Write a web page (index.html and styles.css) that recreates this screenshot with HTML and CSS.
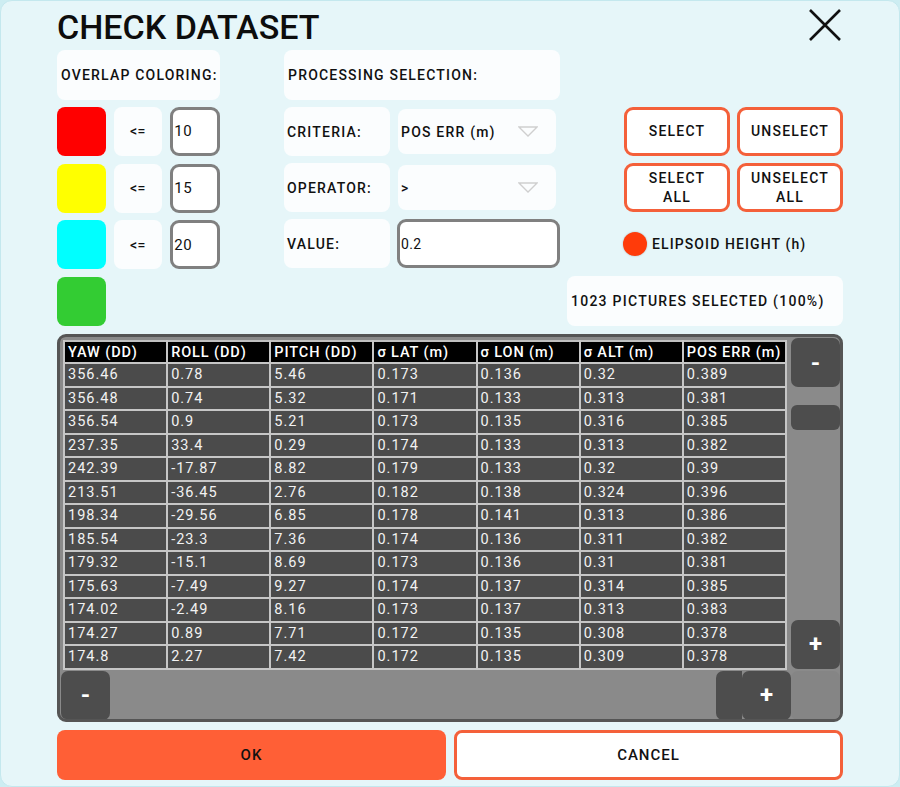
FILE: index.html
```html
<!DOCTYPE html>
<html>
<head>
<meta charset="utf-8">
<link rel="stylesheet" href="styles.css">
</head>
<body>
<div class="panel">
  <div class="titlebar">
    <h1 class="title">CHECK DATASET</h1>
    <svg class="close" width="34" height="34" viewBox="0 0 34 34"><path d="M2 2 L32 32 M32 2 L2 32" stroke="#111" stroke-width="2.6" fill="none"/></svg>
  </div>
  <div class="top">
    <div class="col-left">
      <div class="box head-box">OVERLAP COLORING:</div>
      <div class="crow"><div class="swatch red"></div><div class="box le">&lt;=</div><div class="inp small">10</div></div>
      <div class="crow"><div class="swatch yellow"></div><div class="box le">&lt;=</div><div class="inp small">15</div></div>
      <div class="crow"><div class="swatch cyan"></div><div class="box le">&lt;=</div><div class="inp small">20</div></div>
      <div class="crow"><div class="swatch green"></div></div>
    </div>
    <div class="col-mid">
      <div class="box head-box">PROCESSING SELECTION:</div>
      <div class="mrow"><div class="box lbl">CRITERIA:</div><div class="box dd">POS ERR (m)<svg class="tri" width="20" height="11" viewBox="0 0 20 11"><path d="M1 1 L19 1 L10 10 Z" fill="none" stroke="#cfcfcf" stroke-width="1.3"/></svg></div></div>
      <div class="mrow"><div class="box lbl">OPERATOR:</div><div class="box dd">&gt;<svg class="tri" width="20" height="11" viewBox="0 0 20 11"><path d="M1 1 L19 1 L10 10 Z" fill="none" stroke="#cfcfcf" stroke-width="1.3"/></svg></div></div>
      <div class="mrow"><div class="box lbl">VALUE:</div><div class="inp wide">0.2</div></div>
    </div>
    <div class="col-right">
      <div class="btns">
        <div class="obtn">SELECT</div><div class="obtn">UNSELECT</div>
        <div class="obtn two">SELECT<br>ALL</div><div class="obtn two">UNSELECT<br>ALL</div>
      </div>
      <div class="elip"><span class="dot"></span>ELIPSOID HEIGHT (h)</div>
      <div class="box pics">1023 PICTURES SELECTED (100%)</div>
    </div>
  </div>
  <div class="tframe">
    <div class="tarea">
      <table class="data">
        <thead><tr><th>YAW (DD)</th><th>ROLL (DD)</th><th>PITCH (DD)</th><th>σ LAT (m)</th><th>σ LON (m)</th><th>σ ALT (m)</th><th>POS ERR (m)</th></tr></thead>
        <tbody>
          <tr><td>356.46</td><td>0.78</td><td>5.46</td><td>0.173</td><td>0.136</td><td>0.32</td><td>0.389</td></tr>
          <tr><td>356.48</td><td>0.74</td><td>5.32</td><td>0.171</td><td>0.133</td><td>0.313</td><td>0.381</td></tr>
          <tr><td>356.54</td><td>0.9</td><td>5.21</td><td>0.173</td><td>0.135</td><td>0.316</td><td>0.385</td></tr>
          <tr><td>237.35</td><td>33.4</td><td>0.29</td><td>0.174</td><td>0.133</td><td>0.313</td><td>0.382</td></tr>
          <tr><td>242.39</td><td>-17.87</td><td>8.82</td><td>0.179</td><td>0.133</td><td>0.32</td><td>0.39</td></tr>
          <tr><td>213.51</td><td>-36.45</td><td>2.76</td><td>0.182</td><td>0.138</td><td>0.324</td><td>0.396</td></tr>
          <tr><td>198.34</td><td>-29.56</td><td>6.85</td><td>0.178</td><td>0.141</td><td>0.313</td><td>0.386</td></tr>
          <tr><td>185.54</td><td>-23.3</td><td>7.36</td><td>0.174</td><td>0.136</td><td>0.311</td><td>0.382</td></tr>
          <tr><td>179.32</td><td>-15.1</td><td>8.69</td><td>0.173</td><td>0.136</td><td>0.31</td><td>0.381</td></tr>
          <tr><td>175.63</td><td>-7.49</td><td>9.27</td><td>0.174</td><td>0.137</td><td>0.314</td><td>0.385</td></tr>
          <tr><td>174.02</td><td>-2.49</td><td>8.16</td><td>0.173</td><td>0.137</td><td>0.313</td><td>0.383</td></tr>
          <tr><td>174.27</td><td>0.89</td><td>7.71</td><td>0.172</td><td>0.135</td><td>0.308</td><td>0.378</td></tr>
          <tr><td>174.8</td><td>2.27</td><td>7.42</td><td>0.172</td><td>0.135</td><td>0.309</td><td>0.378</td></tr>
        </tbody>
      </table>
    </div>
    <div class="vscroll">
      <div class="sbtn">-</div>
      <div class="vthumb"></div>
      <div class="vspace"></div>
      <div class="sbtn">+</div>
    </div>
    <div class="hscroll">
      <div class="sbtn">-</div>
      <div class="hspace"></div>
      <div class="hthumb"></div>
      <div class="sbtn">+</div>
    </div>
    <div class="corner"></div>
  </div>
  <div class="actions">
    <div class="ok">OK</div>
    <div class="cancel">CANCEL</div>
  </div>
</div>
</body>
</html>
```

FILE: styles.css
```css
* { box-sizing: border-box; }
html, body { margin: 0; padding: 0; }
body {
  background: #cdedf2;
  font-family: Roboto, "Liberation Sans", sans-serif;
  color: #111;
}
.panel {
  width: 900px;
  height: 787px;
  background: #e6f6f9;
  border-radius: 12px;
  border: 1px solid #c4e8ee;
  padding: 0 56px;
  display: flex;
  flex-direction: column;
}
.titlebar {
  height: 49px;
  display: flex;
  align-items: center;
  justify-content: space-between;
}
.title {
  margin: 0;
  font-size: 34px;
  font-weight: 500;
  letter-spacing: 0;
  line-height: 1;
  padding-top: 2px;
  color: #0d0d0d;
}
.close { margin-right: 1px; margin-top: -2px; }
.top {
  display: flex;
  gap: 0;
  height: 277px;
}
.box {
  background: #fbfdfe;
  border-radius: 8px;
  display: flex;
  align-items: center;
  font-size: 14px;
  font-weight: 500;
  letter-spacing: 1.2px;
}
.head-box { height: 50px; padding-left: 4px; }
.col-left {
  width: 163px;
  display: flex;
  flex-direction: column;
  gap: 7px;
}
.crow { display: flex; gap: 8px; height: 50px; }
.swatch { width: 49px; height: 49px; border-radius: 8px; }
.red { background: #ff0000; }
.yellow { background: #ffff00; }
.cyan { background: #00ffff; }
.green { background: #33cc33; }
.le { width: 49px; height: 49px; justify-content: center; letter-spacing: 0.5px; }
.inp {
  background: #fff;
  border: 3px solid #808080;
  border-radius: 9px;
  display: flex;
  align-items: center;
  font-size: 15px;
  letter-spacing: 0.4px;
  padding-left: 1px;
}
.small { width: 50px; height: 49px; }
.col-mid {
  margin-left: 64px;
  width: 276px;
  display: flex;
  flex-direction: column;
  gap: 7px;
}
.col-mid .head-box { padding-left: 4px; }
.mrow { display: flex; gap: 8px; height: 49px; }
.lbl { width: 106px; padding-left: 3px; }
.dd {
  width: 158px;
  height: 45px;
  margin-top: 2px;
  padding-left: 3px;
  justify-content: space-between;
  padding-right: 18px;
}
.tri { display: block; }
.wide { width: 163px; height: 49px; margin-left: -1px; font-size: 14px; }
.col-right {
  margin-left: 7px;
  width: 276px;
  display: flex;
  flex-direction: column;
}
.btns {
  margin-top: 57px;
  margin-left: 57px;
  display: grid;
  grid-template-columns: 106px 106px;
  grid-auto-rows: 49px;
  column-gap: 7px;
  row-gap: 7px;
}
.obtn {
  background: #fff;
  border: 3px solid #f4603a;
  border-radius: 9px;
  display: flex;
  align-items: center;
  justify-content: center;
  text-align: center;
  font-size: 14px;
  letter-spacing: 1.2px;
  line-height: 19px;
  font-weight: 500;
}
.obtn.two { align-items: flex-start; padding-top: 3px; }
.elip {
  margin-top: 20px;
  margin-left: 56px;
  display: flex;
  align-items: center;
  gap: 5px;
  font-size: 14px;
  font-weight: 500;
  letter-spacing: 1.1px;
  height: 24px;
}
.dot {
  width: 24px;
  height: 24px;
  border-radius: 50%;
  background: #ff3b0a;
  box-shadow: 0 0 2px rgba(0,0,0,0.25);
}
.pics { margin-top: 20px; height: 50px; padding-left: 4px; letter-spacing: 1.25px; }

.tframe {
  margin-top: 7px;
  height: 388px;
  border: 3px solid #555555;
  border-radius: 9px;
  background: #8a8a8a;
  display: grid;
  grid-template-columns: 1fr 49px;
  grid-template-rows: 1fr 50px;
  padding: 1px 0 1px 1px;
  overflow: hidden;
}
.tarea {
  padding: 2px 0 0 2px;
  background: #8a8a8a;
}
.data {
  border-collapse: collapse;
  border: 2px solid #c0c0c0;
  width: 724px;
  table-layout: fixed;
  font-size: 14.5px;
  letter-spacing: 1px;
  color: #f2f2f2;
}
.data th, .data td {
  border: 2px solid #c6c6c6;
  text-align: left;
  padding: 0 0 0 3px;
  font-weight: 400;
  white-space: nowrap;
  overflow: hidden;
}
.data th { background: #000; height: 22px; color: #fff; border-top: 0; font-weight: 500; letter-spacing: 0.9px; }
.data td { background: #4b4b4b; height: 23.5px; }
.vscroll {
  display: flex;
  flex-direction: column;
  padding: 0 0 1px 0;
}
.sbtn {
  width: 49px;
  height: 49px;
  background: #4d4d4d;
  border-radius: 7px;
  color: #fff;
  font-size: 24px;
  font-weight: 700;
  display: flex;
  align-items: center;
  justify-content: center;
}
.vthumb {
  margin-top: 18px;
  height: 25px;
  background: #4d4d4d;
  border-radius: 6px;
}
.vspace { flex: 1; }
.hscroll {
  display: flex;
  align-items: stretch;
  padding-top: 1px;
}
.hspace { flex: 1; }
.hthumb {
  width: 26px;
  background: #4d4d4d;
  border-radius: 7px 0 0 7px;
}
.corner {
  background: #858585;
  border-radius: 7px;
  margin: 1px 0 0 0;
}
.actions {
  margin-top: 8px;
  display: grid;
  grid-template-columns: 1fr 1fr;
  gap: 8px;
  height: 50px;
}
.ok, .cancel {
  border-radius: 8px;
  display: flex;
  align-items: center;
  justify-content: center;
  font-size: 15px;
  letter-spacing: 1px;
  font-weight: 500;
}
.ok { background: #ff5f36; }
.cancel { background: #fff; border: 3px solid #f4603a; }
```
